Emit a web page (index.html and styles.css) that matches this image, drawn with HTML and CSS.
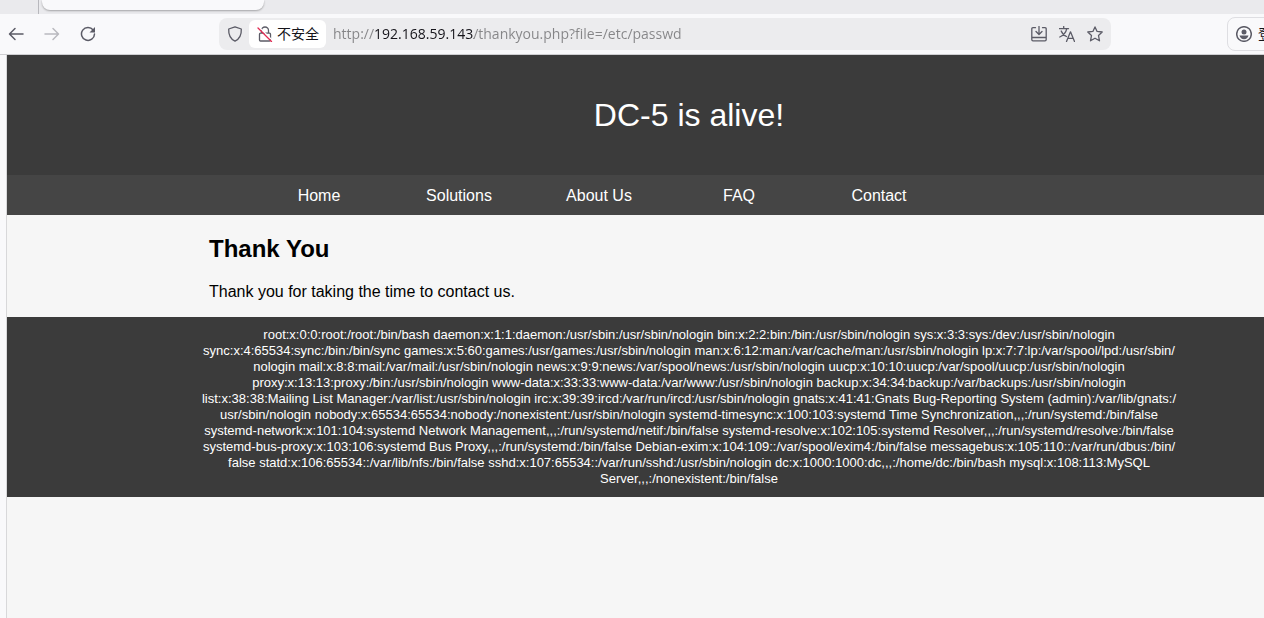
FILE: index.html
```html
<!DOCTYPE html>
<html lang="en">
<head>
  <meta charset="UTF-8">
  <title>DC-5 is alive!</title>
  <link rel="stylesheet" href="styles.css">
</head>
<body>
  <div class="tabs">
    <div class="tab"></div>
  </div>

  <div class="toolbar">
    <button class="tool" aria-label="Back">
      <svg width="16" height="16" viewBox="0 0 16 16"><path d="M15 8H2M7 2.500L1.500 8L7 13.500"/></svg>
    </button>
    <button class="tool" aria-label="Forward" disabled>
      <svg width="16" height="16" viewBox="0 0 16 16"><path d="M1 8H14M9 2.500L14.500 8L9 13.500"/></svg>
    </button>
    <button class="tool" aria-label="Reload">
      <svg width="16" height="16" viewBox="0 0 16 16"><path d="M13.200 4A6.500 6.500 0 1 0 14.500 8"/><path class="solid" d="M15 1V6.500H9.500Z"/></svg>
    </button>

    <div class="urlbar">
      <svg class="shield" width="16" height="16" viewBox="0 0 16 16"><path d="M8 .8L14.300 3C14.600 8.500 12.800 12.800 8 15.200C3.200 12.800 1.400 8.500 1.700 3Z"/></svg>
      <button class="insecure">
        <svg width="16" height="16" viewBox="0 0 16 16"><path d="M4.500 7V4.500A3.500 3.500 0 0 1 11.500 4.500V7M3.500 7.200H12.500Q13.500 7.200 13.500 8.200V14Q13.500 15 12.500 15H3.500Q2.500 15 2.500 14V8.200Q2.500 7.200 3.500 7.200Z"/><path class="halo" d="M2 1L15.500 14.500"/><path class="slash" d="M1 2L14.500 15.500"/></svg>
        <span>不安全</span>
      </button>
      <input class="url" type="text" aria-label="Address" value="http://192.168.59.143/thankyou.php?file=/etc/passwd">
      <button class="action" aria-label="Install">
        <svg width="16" height="16" viewBox="0 0 16 16"><path d="M4.500 1.700H2Q.8 1.700 .8 3V13.500Q.8 14.800 2 14.800H14Q15.200 14.800 15.200 13.500V3Q15.200 1.700 14 1.700H11.500M1 11.500H15M8 .5V8M5 5.500L8 8.500L11 5.500"/></svg>
      </button>
      <button class="action" aria-label="Translate">
        <svg width="16" height="16" viewBox="0 0 16 16"><path d="M0 2.700H9.500M4.700 .5V2.700M7.800 2.700C7 6.500 4 9.500 .8 11M2.200 5C3.500 8 5 9.500 7.500 10.500M7.500 15.500L11.500 5.800L15.500 15.500M9 12.300H14"/></svg>
      </button>
      <button class="action" aria-label="Bookmark">
        <svg width="16" height="16" viewBox="0 0 16 16"><path d="M8 .9L10.100 5.400L15.200 6L11.500 9.500L12.500 14.800L8 12.200L3.500 14.800L4.500 9.500L.8 6L5.900 5.400Z"/></svg>
      </button>
    </div>

    <button class="account">
      <svg width="16" height="16" viewBox="0 0 16 16"><circle cx="8" cy="8" r="7.300"/><circle class="solid" cx="8" cy="6" r="2.500"/><path class="solid" d="M3.500 9.500H12.500Q11.500 13.200 8 13.200Q4.500 13.200 3.500 9.500Z"/></svg>
      <span>登录</span>
    </button>
  </div>

  <div class="page">
    <header>
      <h1>DC-5 is alive!</h1>
    </header>
    <nav>
      <ul class="container">
        <li><a href="#">Home</a></li>
        <li><a href="#">Solutions</a></li>
        <li><a href="#">About Us</a></li>
        <li><a href="#">FAQ</a></li>
        <li><a href="#">Contact</a></li>
      </ul>
    </nav>
    <main class="container">
      <h2>Thank You</h2>
      <p>Thank you for taking the time to contact us.</p>
    </main>
    <footer>
      root:x:0:0:root:/root:/bin/bash daemon:x:1:1:daemon:/usr/sbin:/usr/sbin/nologin bin:x:2:2:bin:/bin:/usr/sbin/nologin sys:x:3:3:sys:/dev:/usr/sbin/nologin<br>
      sync:x:4:65534:sync:/bin:/bin/sync games:x:5:60:games:/usr/games:/usr/sbin/nologin man:x:6:12:man:/var/cache/man:/usr/sbin/nologin lp:x:7:7:lp:/var/spool/lpd:/usr/sbin/<br>
      nologin mail:x:8:8:mail:/var/mail:/usr/sbin/nologin news:x:9:9:news:/var/spool/news:/usr/sbin/nologin uucp:x:10:10:uucp:/var/spool/uucp:/usr/sbin/nologin<br>
      proxy:x:13:13:proxy:/bin:/usr/sbin/nologin www-data:x:33:33:www-data:/var/www:/usr/sbin/nologin backup:x:34:34:backup:/var/backups:/usr/sbin/nologin<br>
      list:x:38:38:Mailing List Manager:/var/list:/usr/sbin/nologin irc:x:39:39:ircd:/var/run/ircd:/usr/sbin/nologin gnats:x:41:41:Gnats Bug-Reporting System (admin):/var/lib/gnats:/<br>
      usr/sbin/nologin nobody:x:65534:65534:nobody:/nonexistent:/usr/sbin/nologin systemd-timesync:x:100:103:systemd Time Synchronization,,,:/run/systemd:/bin/false<br>
      systemd-network:x:101:104:systemd Network Management,,,:/run/systemd/netif:/bin/false systemd-resolve:x:102:105:systemd Resolver,,,:/run/systemd/resolve:/bin/false<br>
      systemd-bus-proxy:x:103:106:systemd Bus Proxy,,,:/run/systemd:/bin/false Debian-exim:x:104:109::/var/spool/exim4:/bin/false messagebus:x:105:110::/var/run/dbus:/bin/<br>
      false statd:x:106:65534::/var/lib/nfs:/bin/false sshd:x:107:65534::/var/run/sshd:/usr/sbin/nologin dc:x:1000:1000:dc,,,:/home/dc:/bin/bash mysql:x:108:113:MySQL<br>
      Server,,,:/nonexistent:/bin/false
    </footer>
  </div>
</body>
</html>
```
FILE: styles.css
```css
* {
  box-sizing: border-box;
}
body {
  margin: 0;
  min-height: 100vh;
  display: flex;
  flex-direction: column;
  overflow: hidden;
  background: #f9f9fb;
  font-family: "Liberation Sans", Arial, sans-serif;
}
button {
  flex: none;
  display: flex;
  align-items: center;
  justify-content: center;
  padding: 0;
  border: none;
  background: none;
  color: #15141a;
  font-family: "Open Sans", "Noto Sans CJK SC", sans-serif;
  font-size: 14px;
  line-height: 20px;
}
svg {
  flex: none;
  fill: none;
  stroke: #5b5b66;
  stroke-width: 1.5;
  stroke-linecap: round;
  stroke-linejoin: round;
}
svg .solid {
  fill: #5b5b66;
  stroke: none;
}

/* browser bar */
.tabs {
  height: 14px;
  padding-left: 38px;
  background: #eaeaed;
}
.tab {
  position: relative;
  width: 222px;
  height: 10px;
  margin-left: 4px;
  border-radius: 0 0 8px 8px;
  background: #f9f9fb;
  box-shadow: 0 1px 2px rgba(0,0,0,0.3);
}
.tab::before {
  content: "";
  position: absolute;
  left: -4px;
  top: 0;
  width: 1px;
  height: 14px;
  background: #b8b8bd;
}
.toolbar {
  display: flex;
  align-items: center;
  gap: 4px;
  height: 41px;
  border-bottom: 1px solid #cfcfd2;
}
.tool {
  width: 32px;
  height: 32px;
}
.tool:disabled {
  opacity: 0.4;
}
.urlbar {
  flex: 1;
  display: flex;
  align-items: center;
  height: 32px;
  margin: 0 112px 0 111px;
  padding: 0 2px 0 8px;
  border-radius: 8px;
  background: #ececee;
}
.shield {
  stroke-width: 1.3;
}
.insecure {
  gap: 4px;
  height: 28px;
  margin-left: 6px;
  padding: 0 7px 0 8px;
  border-radius: 6px;
  background: #fff;
}
.insecure svg {
  stroke-width: 1.3;
}
svg .halo {
  stroke: #fff;
}
svg .slash {
  stroke: #e22850;
}
/* the host part of the address is darker than the rest */
.url {
  flex: 1;
  min-width: 0;
  height: 28px;
  padding: 0 0 2px 7px;
  border: none;
  outline: none;
  background: linear-gradient(to right, #858587 49px, #15141a 49px, #15141a 148px, #858587 148px);
  -webkit-background-clip: text;
  background-clip: text;
  -webkit-text-fill-color: transparent;
  color: #858587;
  font-family: "Open Sans", "Noto Sans", sans-serif;
  font-size: 14px;
}
.action {
  width: 28px;
  height: 28px;
}
.action svg {
  stroke-width: 1.3;
}
.account {
  justify-content: flex-start;
  gap: 6px;
  width: 80px;
  height: 34px;
  margin-right: -43px;
  padding-left: 8px;
  border: 1px solid #dedee2;
  border-radius: 8px;
}

/* the site, wider than the window */
.page {
  flex: 1;
  margin: 0 -107px 0 6px;
  border-left: 1px solid #d8d8da;
  background: #f6f6f6;
}
.container {
  width: 960px;
  margin: 0 auto;
}
header {
  padding: 40px 0;
  background: #3b3b3b;
  color: #fff;
  text-align: center;
}
h1 {
  margin: 0;
  font-size: 32px;
  font-weight: normal;
  line-height: 40px;
}
nav {
  background: #454545;
}
nav ul {
  display: flex;
  padding: 0 0 0 40px;
  list-style: none;
}
nav a {
  display: block;
  width: 140px;
  padding: 11px 0 9px;
  color: #fff;
  line-height: 20px;
  text-align: center;
  text-decoration: none;
}
main {
  padding: 20px 0 16px;
}
h2 {
  margin: 0 0 20px;
  font-size: 24px;
  line-height: 28px;
}
p {
  margin: 0;
  line-height: 18px;
}
footer {
  padding: 10px 0;
  background: #3b3b3b;
  color: #fff;
  font-size: 13px;
  line-height: 16px;
  text-align: center;
  white-space: nowrap;
}
```
